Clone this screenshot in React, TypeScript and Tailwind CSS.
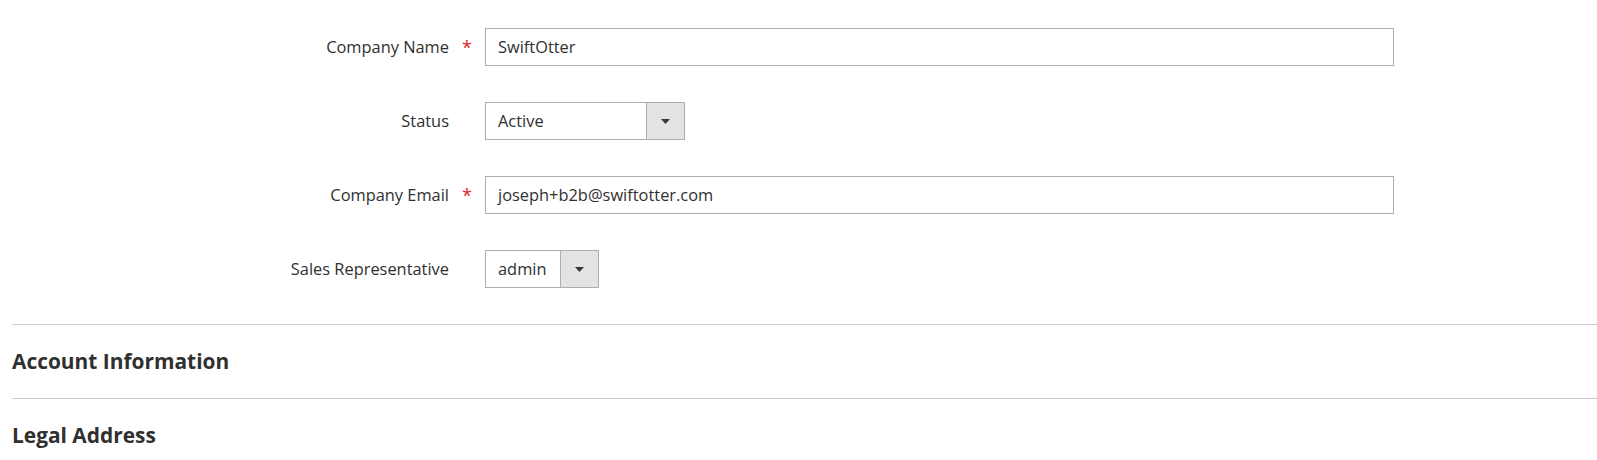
import React from "react";

function Row({ label, required, children }: { label: string; required?: boolean; children: React.ReactNode }) {
  return (
    <div className="flex h-[38px] items-center">
      <div className="w-[449px] text-right text-[16.4px] text-[#303030]">{label}</div>
      <div className="flex w-[36px] justify-center">
        {required ? <span className="text-[18px] leading-none text-[#e22626]">*</span> : null}
      </div>
      {children}
    </div>
  );
}

function Select({ value, width }: { value: string; width: string }) {
  return (
    <div className={`flex h-[38px] border border-[#adadad] bg-white ${width}`}>
      <div className="flex flex-1 items-center pl-[12px] text-[16.4px] text-[#303030]">{value}</div>
      <div className="flex w-[38px] items-center justify-center border-l border-[#adadad] bg-[#e3e3e3]">
        <svg width="9" height="5" viewBox="0 0 9 5">
          <path d="M0 0 L9 0 L4.5 5 Z" fill="#41362f" />
        </svg>
      </div>
    </div>
  );
}

function Input({ value }: { value: string }) {
  return (
    <div className="flex h-[38px] w-[909px] items-center border border-[#adadad] bg-white pl-[12px] text-[16.4px] text-[#303030]">
      {value}
    </div>
  );
}

export default function App() {
  return (
    <div className="h-[460px] w-[1597px] overflow-hidden bg-white font-['Open_Sans',sans-serif]">
      <div className="flex flex-col gap-[36px] pt-[28px]">
        <Row label="Company Name" required>
          <Input value="SwiftOtter" />
        </Row>
        <Row label="Status">
          <Select value="Active" width="w-[200px]" />
        </Row>
        <Row label="Company Email" required>
          <Input value="joseph+b2b@swiftotter.com" />
        </Row>
        <Row label="Sales Representative">
          <Select value="admin" width="w-[114px]" />
        </Row>
      </div>
      <div className="ml-[12px] mt-[36px] border-t border-[#cccccc]">
        <div className="flex h-[73px] items-center text-[20.9px] font-bold text-[#303030]">Account Information</div>
      </div>
      <div className="ml-[12px] border-t border-[#cccccc]">
        <div className="flex h-[73px] items-center text-[20.9px] font-bold text-[#303030]">Legal Address</div>
      </div>
    </div>
  );
}
